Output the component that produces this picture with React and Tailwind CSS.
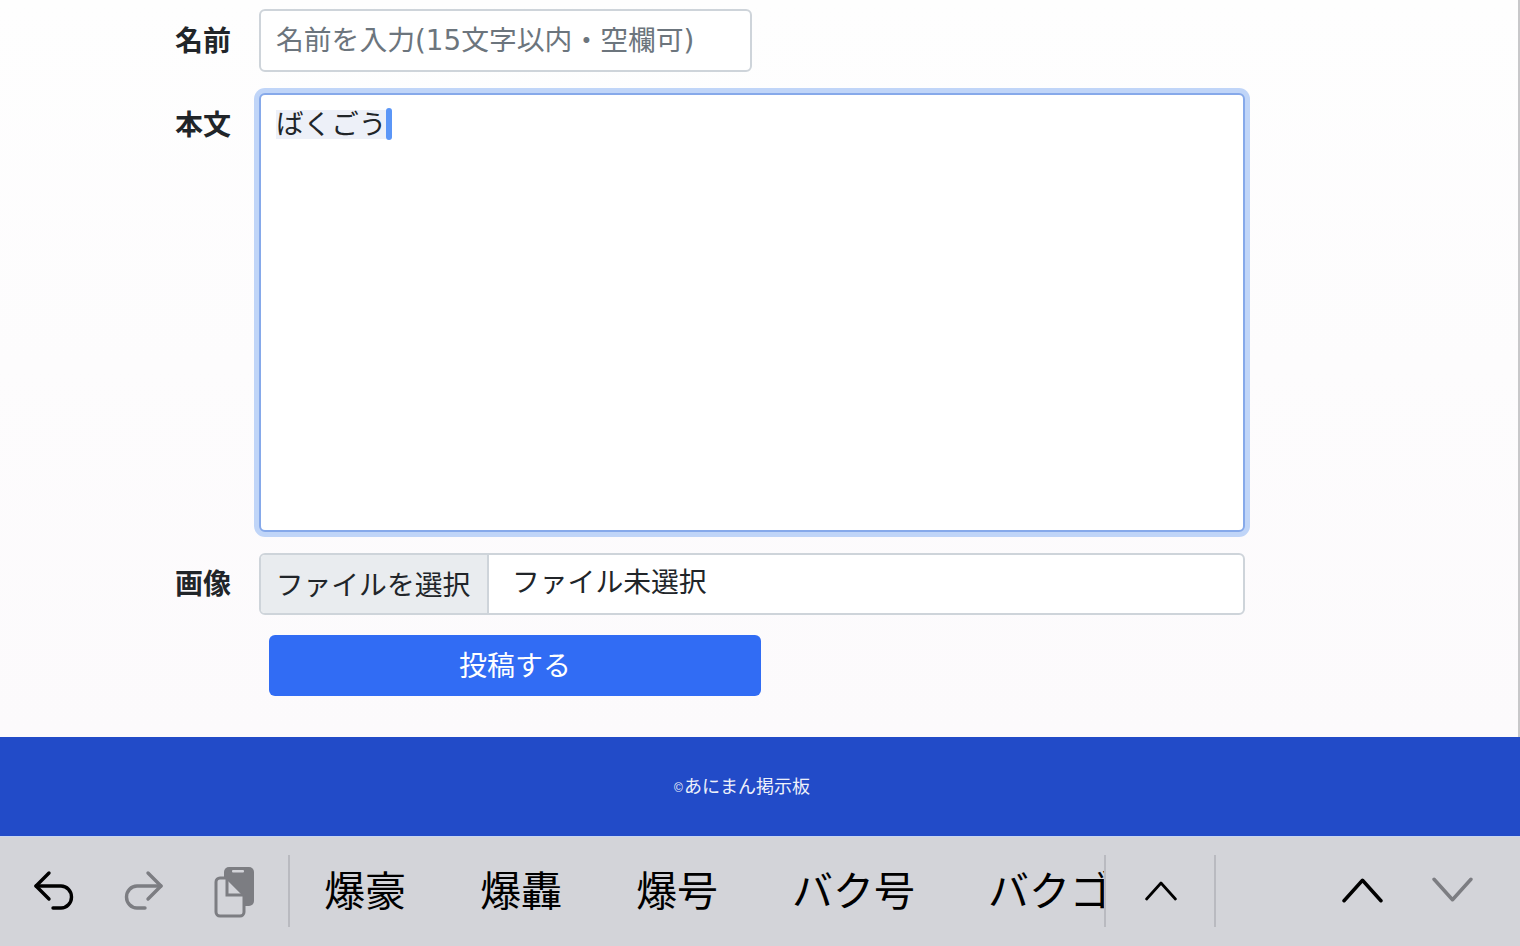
const JP = "font-['Liberation_Sans','Noto_Sans_CJK_JP',sans-serif]";

function UndoIcon() {
  return (
    <svg width="48" height="48" viewBox="0 0 48 48" fill="none" stroke="#000" strokeWidth="3.4" strokeLinecap="round" strokeLinejoin="round">
      <path d="M20 6 L7 19 L20 32" />
      <path d="M7 19 H32 a10.5 11 0 0 1 0 22 H24" />
    </svg>
  );
}

function RedoIcon() {
  return (
    <svg width="48" height="48" viewBox="0 0 48 48" fill="none" stroke="#7c7d82" strokeWidth="3.4" strokeLinecap="round" strokeLinejoin="round">
      <path d="M29 6 L42 19 L29 32" />
      <path d="M42 19 H18 a10.5 11 0 0 0 0 22 H26" />
    </svg>
  );
}

function PasteIcon() {
  return (
    <svg width="48" height="56" viewBox="0 0 48 56" fill="none">
      <rect x="15" y="4" width="30" height="39" rx="5" fill="#7c7d82" />
      <rect x="23" y="7" width="12" height="2.5" rx="1" fill="#d3d4d9" />
      <path d="M7 19 a4 4 0 0 1 4 -4 H18 L35 32 V49 a4 4 0 0 1 -4 4 H11 a4 4 0 0 1 -4 -4 Z" fill="#d3d4d9" stroke="#7c7d82" strokeWidth="3" strokeLinejoin="round" />
      <path d="M18 15 V32 H35" stroke="#7c7d82" strokeWidth="3" />
    </svg>
  );
}

function Chevron({ down, size, color }) {
  return (
    <svg width={size} height={size} viewBox="0 0 40 40" fill="none" stroke={color} strokeWidth={size > 30 ? 3.4 : 4.4} strokeLinecap="round" strokeLinejoin="round">
      <path d={down ? "M2 9 L20 29 L38 9" : "M2 30 L20 10 L38 30"} />
    </svg>
  );
}

function Divider() {
  return <div className="w-[2px] h-[72px] bg-[#b9bac0] shrink-0" />;
}

const candidates = ["爆豪", "爆轟", "爆号", "バク号", "バクゴウ"];

export default function App() {
  return (
    <div className={`w-[1520px] h-[946px] flex flex-col overflow-hidden ${JP}`}>
      <main className="h-[737px] pt-[9px] pl-[175px] bg-gradient-to-b from-[#fefefe] to-[#fcfafc] border-r-2 border-[#c8c8ca]">
        <div className="flex">
          <label className="w-[84px] pt-[13px] text-[28px] leading-[40px] font-bold text-[#212529]">名前</label>
          <input
            placeholder="名前を入力(15文字以内・空欄可)"
            className="w-[493px] h-[63px] px-[15px] bg-white border-2 border-[#ced4da] rounded-md font-['DejaVu_Sans','Noto_Sans_CJK_JP',sans-serif] text-[27.8px] outline-none placeholder:text-[#6c757d]"
          />
        </div>

        <div className="flex mt-[21px]">
          <label className="w-[84px] pt-[13px] text-[28px] leading-[40px] font-bold text-[#212529]">本文</label>
          <div className="w-[986px] h-[439px] px-[15px] pt-[11px] bg-white border-2 border-[#86a9ea] rounded-md shadow-[0_0_0_5px_#c0d5f8]">
            <div className="flex items-center h-[36px]">
              <span className="h-[29px] leading-[29px] bg-[#edf0f8] text-[27.6px] text-[#212529]">ばくごう</span>
              <span className="w-[6px] h-[32px] rounded-full bg-[#5b96f7]" />
            </div>
          </div>
        </div>

        <div className="flex mt-[21px]">
          <label className="w-[84px] pt-[12px] text-[28px] leading-[40px] font-bold text-[#212529]">画像</label>
          <div className="flex w-[986px] h-[62px] bg-white border-2 border-[#ced4da] rounded-md overflow-hidden">
            <button className="w-[228px] pt-[3px] pr-[2px] bg-[#e9ecef] border-r-2 border-[#ced4da] text-[27.8px] text-[#212529]">ファイルを選択</button>
            <span className="ml-[23px] leading-[55px] text-[27.8px] text-[#212529]">ファイル未選択</span>
          </div>
        </div>

        <div className="mt-[20px] pl-[94px]">
          <button className="w-[492px] h-[61px] pt-[2px] rounded-md bg-[#316cf4] text-white text-[28px]">投稿する</button>
        </div>
      </main>

      <footer className="h-[99px] flex items-center justify-center pt-[2px] bg-[#224bc8] text-[#eef1fa] pr-[36px]">
        <span className="text-[12px] mr-px">©</span>
        <span className="text-[18px]">あにまん掲示板</span>
      </footer>

      <div className="h-[110px] flex items-center pb-[2px] bg-[#d3d4d9] border-t border-[#c8d6f0]">
        <div className="flex items-center pl-[8px] w-[288px] shrink-0">
          <div className="w-[90px] flex justify-center"><UndoIcon /></div>
          <div className="w-[90px] flex justify-center"><RedoIcon /></div>
          <div className="w-[90px] flex justify-center"><PasteIcon /></div>
        </div>
        <Divider />
        <div className="w-[814px] flex gap-[74px] pl-[34px] pt-[4px] overflow-hidden text-[41px] text-black whitespace-nowrap shrink-0">
          {candidates.map((c, i) => (
            <span key={c} className={i === 4 ? "shrink-0 -ml-[1px]" : "shrink-0"}>{c}</span>
          ))}
        </div>
        <Divider />
        <div className="w-[108px] pl-[2px] flex justify-center"><Chevron size={32} color="#000" /></div>
        <Divider />
        <div className="flex-1 flex items-center pl-[126px] gap-[49px]">
          <Chevron size={41} color="#000" />
          <Chevron down size={41} color="#7c7d82" />
        </div>
      </div>
    </div>
  );
}
